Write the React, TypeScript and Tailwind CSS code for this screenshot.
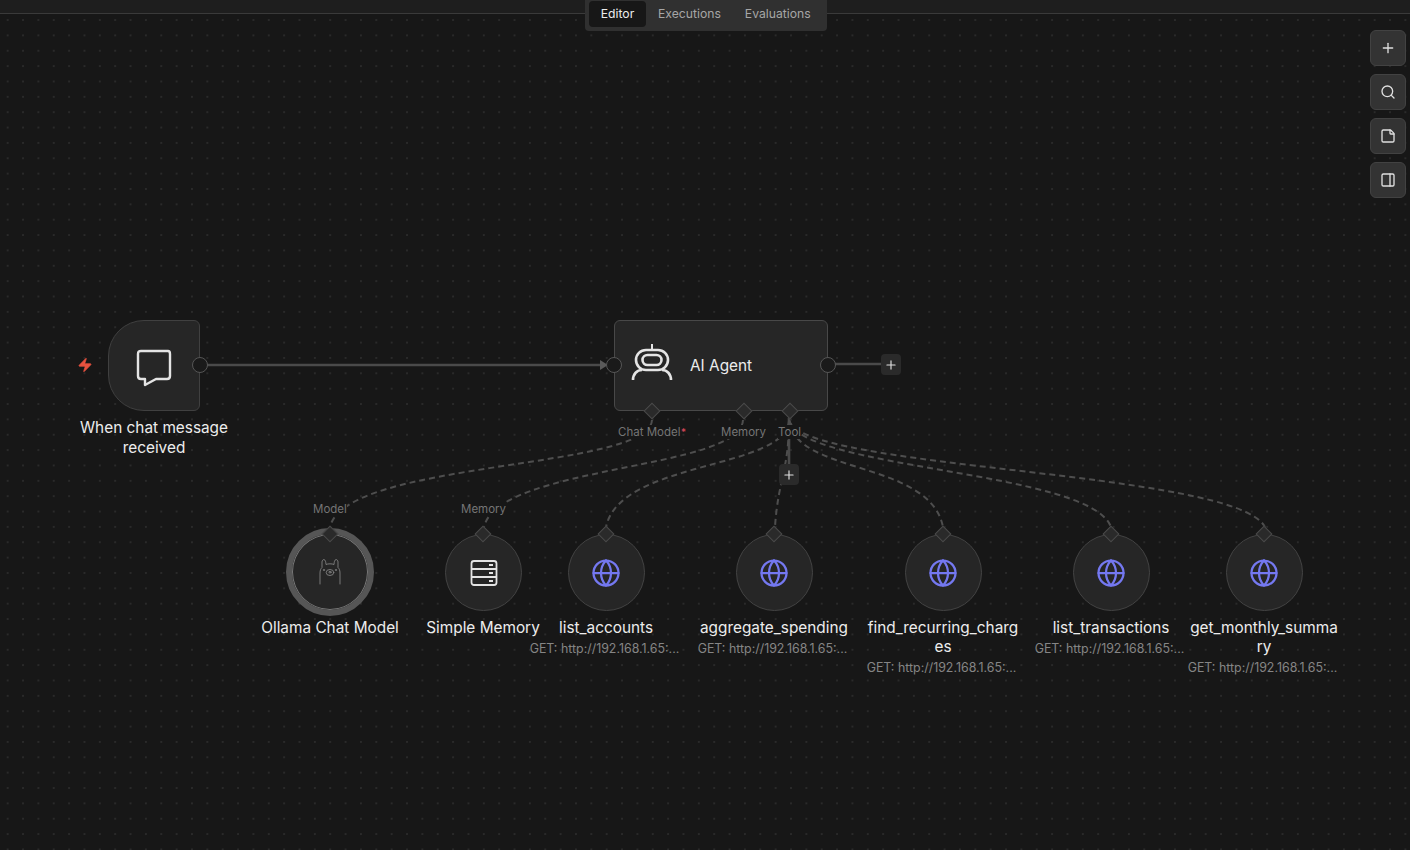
import { Globe, Plus, Search, StickyNote, PanelRight, Zap } from "lucide-react";

const FONT = "font-['Inter','Liberation_Sans',sans-serif]";

// Tool nodes on the lower row
const toolNodes = [
  { name: "list_accounts", box: "left-[530px] top-[534px]" },
  { name: "aggregate_spending", box: "left-[698px] top-[534px]" },
  { name: "find_recurring_charges", box: "left-[867px] top-[534px]" },
  { name: "list_transactions", box: "left-[1035px] top-[534px]" },
  { name: "get_monthly_summary", box: "left-[1188px] top-[534px]" },
];

// Edge paths between the nodes
const dashedEdges = [
  "M652 420 C 650 470, 345 460, 330 527",
  "M743 420 C 741 470, 498 465, 484 527",
  "M789 420 C 787 470, 620 460, 606 527",
  "M789 420 C 789 470, 778 480, 775 527",
  "M789 420 C 795 475, 930 460, 943 527",
  "M789 420 C 800 470, 1090 470, 1111 527",
  "M789 420 C 800 470, 1235 470, 1265 527",
];

function Diamond({ className }: { className: string }) {
  return <div className={`absolute w-[12px] h-[12px] rotate-45 bg-[#2a2a2a] border border-[#4a4a4a] ${className}`} />;
}

function Dot({ className }: { className: string }) {
  return <div className={`absolute w-[16px] h-[16px] rounded-full bg-[#1a1a1a] border border-[#565656] ${className}`} />;
}

function PlusBox({ className }: { className: string }) {
  return (
    <div className={`absolute w-[20px] h-[21px] rounded-[4px] bg-[#2a2a2a] flex items-center justify-center text-[#e0e0e0] ${className}`}>
      <Plus size={14} strokeWidth={2} />
    </div>
  );
}

function PortLabel({ text, className }: { text: string; className: string }) {
  return <span className={`absolute text-[11.5px] leading-[14px] text-[#757575] bg-[#171717] ${className}`}>{text}</span>;
}

function RobotIcon() {
  return (
    <svg width="42" height="42" viewBox="0 0 42 42" fill="none" stroke="#e4e4e4" strokeWidth="2.6" className="absolute left-[16px] top-[20px]">
      <path d="M21 3 V9" strokeWidth="2" />
      <rect x="5" y="9" width="32" height="20" rx="10" />
      <rect x="11.5" y="14" width="19" height="10" rx="5" />
      <path d="M2 39 C2 33 6 29 11 29 M40 39 C40 33 36 29 31 29" />
    </svg>
  );
}

function ChatIcon() {
  return (
    <svg width="36" height="38" viewBox="0 0 36 38" fill="none" stroke="#e4e4e4" strokeWidth="2.4" strokeLinejoin="round" className="mt-[5px]">
      <path d="M3 5 Q3 2 6 2 H33 Q35 2 35 5 V27 Q35 30 32 30 H21 L10 36 V30 H6 Q3 30 3 27 Z" transform="translate(-1 0)" />
    </svg>
  );
}

function ServerIcon() {
  return (
    <svg width="28" height="28" viewBox="0 0 28 28" fill="none" stroke="#e4e4e4" strokeWidth="1.8">
      <rect x="1.5" y="2" width="25" height="24" rx="2.5" />
      <path d="M1.5 10 H26.5 M1.5 18 H26.5" />
      <path d="M19 6 H23 M19 14 H23 M19 22 H23" strokeWidth="2" />
    </svg>
  );
}

function LlamaIcon() {
  return (
    <svg width="24" height="28" viewBox="0 0 24 28" fill="none" stroke="#828282" strokeWidth="0.9" strokeLinecap="round" strokeLinejoin="round">
      <path d="M2 26 V15 C2 12 3 10.5 4 9.5 V4 C4 2.5 5 1.5 6 1.5 C7.5 2 7.8 4 8 6.5 C10 5.6 14 5.6 16 6.5 C16.2 4 16.5 2 18 1.5 C19 1.5 20 2.5 20 4 V9.5 C21 10.5 22 12 22 15 V26" />
      <ellipse cx="12" cy="14.5" rx="3.8" ry="3" />
      <ellipse cx="12" cy="14.2" rx="1.2" ry="0.8" />
      <path d="M5.5 12 H6.5 M17.5 12 H18.5" strokeWidth="1.3" />
    </svg>
  );
}

function ToolNode({ name, box }: { name: string; box: string }) {
  return (
    <div className={`absolute w-[152px] flex flex-col items-center ${box}`}>
      <div className="w-[77px] h-[77px] rounded-full bg-[#262626] border border-[#434343] flex items-center justify-center">
        <Globe size={30} strokeWidth={1.8} className="text-[#7478f0]" />
      </div>
      <Diamond className="left-[70px] top-[-6px]" />
      <div className="mt-[7px] w-[152px] text-center text-[15.36px] leading-[19px] text-[#ececec] break-all">{name}</div>
      <div className="mt-[2px] pr-[3px] text-center text-[12.4px] leading-[19px] text-[#858585] whitespace-nowrap">GET: http://192.168.1.65:...</div>
    </div>
  );
}

export default function App() {
  return (
    <div className={`relative w-[1410px] h-[850px] overflow-hidden bg-[#171717] ${FONT}`}>
      {/* Canvas dots */}
      <div className="absolute inset-0 bg-[radial-gradient(circle,#363636_0.6px,transparent_0.8px)] bg-[size:15.36px_15.36px] bg-[position:0px_-3px]" />

      {/* Top line and tabs */}
      <div className="absolute left-0 right-0 top-0 h-[14px] bg-[#1e1e1e] border-b border-[#3a3a3a]" />
      <div className="absolute left-[585px] top-0 w-[242px] h-[31px] rounded-b-[4px] bg-[#303030] flex items-start pl-[4px] text-[12.2px] leading-[28px]">
        <div className="w-[57px] h-[26px] mt-[1px] rounded-[4px] bg-[#171717] text-[#ececec] flex items-center justify-center">Editor</div>
        <div className="ml-[12px] text-[#a6a6a6]">Executions</div>
        <div className="ml-[24px] text-[#a6a6a6]">Evaluations</div>
      </div>

      {/* Right toolbar */}
      <div className="absolute left-[1370px] top-[30px] flex flex-col gap-[8px]">
        {[Plus, Search, StickyNote, PanelRight].map((Icon, i) => (
          <div key={i} className="w-[36px] h-[36px] rounded-[6px] bg-[#333333] border border-[#424242] flex items-center justify-center text-[#e0e0e0]">
            <Icon size={16} strokeWidth={2} />
          </div>
        ))}
      </div>

      {/* Edges */}
      <svg className="absolute left-0 top-0" width="1410" height="850" fill="none">
        <path d="M207 365 H601" stroke="#4a4a4a" strokeWidth="2.6" />
        <path d="M600 360 L608 365 L600 370 Z" fill="#5a5a5a" />
        <path d="M835 364 H882" stroke="#4a4a4a" strokeWidth="2.6" />
        <path d="M789 418 V466" stroke="#4a4a4a" strokeWidth="2.6" />
        {dashedEdges.map((d, i) => (
          <path key={i} d={d} stroke="#4e4e4e" strokeWidth="2" strokeDasharray="6 4" />
        ))}
      </svg>

      {/* Trigger node */}
      <div className="absolute left-[77px] top-[357px] text-[#e8523f]">
        <Zap size={16} fill="currentColor" strokeWidth={1} />
      </div>
      <div className="absolute left-[108px] top-[320px] w-[92px] h-[91px] rounded-l-[36px] rounded-r-[6px] bg-[#262626] border border-[#404040] flex items-center justify-center">
        <ChatIcon />
      </div>
      <Dot className="left-[192px] top-[357px]" />
      <div className="absolute left-[78px] top-[418px] w-[152px] text-center text-[15.36px] leading-[20px] text-[#ececec]">When chat message received</div>

      {/* AI Agent node */}
      <div className="absolute left-[614px] top-[320px] w-[214px] h-[91px] rounded-[6px] bg-[#262626] border border-[#484848]">
        <RobotIcon />
        <span className="absolute left-[75px] top-[34px] text-[15.36px] leading-[22px] text-[#ececec]">AI Agent</span>
      </div>
      <Dot className="left-[606px] top-[357px]" />
      <Dot className="left-[820px] top-[357px]" />
      <PlusBox className="left-[881px] top-[354px]" />
      <Diamond className="left-[646px] top-[405px]" />
      <Diamond className="left-[738px] top-[405px]" />
      <Diamond className="left-[784px] top-[405px]" />
      <PortLabel text="Chat Model" className="left-[618px] top-[425px]" />
      <span className="absolute left-[681px] top-[425px] text-[10px] leading-[14px] text-[#e04a5f]">*</span>
      <PortLabel text="Memory" className="left-[721px] top-[425px]" />
      <PortLabel text="Tool" className="left-[778px] top-[425px]" />
      <PlusBox className="left-[779px] top-[464px]" />

      {/* Ollama node */}
      <div className="absolute left-[286px] top-[528px] w-[88px] h-[88px] rounded-full bg-[#262626] border-[6px] border-[#565656] flex items-center justify-center shadow-[inset_0_0_0_1px_#7a7a7a]">
        <LlamaIcon />
      </div>
      <PortLabel text="Model" className="left-[313px] top-[502px]" />
      <Diamond className="left-[324px] top-[528px]" />
      <div className="absolute left-[254px] top-[618px] w-[152px] text-center text-[15.36px] leading-[19px] text-[#ececec]">Ollama Chat Model</div>

      {/* Simple Memory node */}
      <div className="absolute left-[445px] top-[534px] w-[77px] h-[77px] rounded-full bg-[#262626] border border-[#434343] flex items-center justify-center">
        <ServerIcon />
      </div>
      <PortLabel text="Memory" className="left-[461px] top-[502px]" />
      <Diamond className="left-[477px] top-[528px]" />
      <div className="absolute left-[407px] top-[618px] w-[152px] text-center text-[15.36px] leading-[19px] text-[#ececec]">Simple Memory</div>

      {/* Tool nodes */}
      {toolNodes.map((n) => (
        <ToolNode key={n.name} name={n.name} box={n.box} />
      ))}
    </div>
  );
}
